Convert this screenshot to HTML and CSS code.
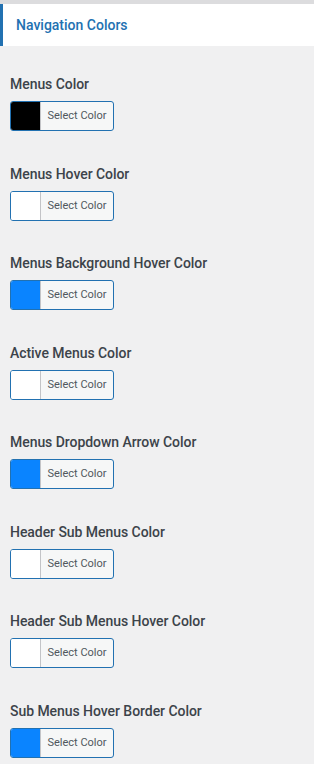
FILE: index.html
```html
<!DOCTYPE html>
<html lang="en">
<head>
  <meta charset="UTF-8" />
  <meta name="viewport" content="width=device-width, initial-scale=1.0"/>
  <title>Navigation Colors</title>
  <link rel="stylesheet" href="styles.css">
</head>
<body>

  <!-- section title -->
  <header class="panel-head">
    <h2>Navigation Colors</h2>
  </header>

  <section class="color-list">
    <div class="color-field">
      <label>Menus Color</label>
      <button class="color-btn"><span class="swatch swatch-black"></span><span class="btn-text">Select Color</span></button>
    </div>
    <div class="color-field">
      <label>Menus Hover Color</label>
      <button class="color-btn"><span class="swatch"></span><span class="btn-text">Select Color</span></button>
    </div>
    <div class="color-field">
      <label>Menus Background Hover Color</label>
      <button class="color-btn"><span class="swatch swatch-blue"></span><span class="btn-text">Select Color</span></button>
    </div>
    <div class="color-field">
      <label>Active Menus Color</label>
      <button class="color-btn"><span class="swatch"></span><span class="btn-text">Select Color</span></button>
    </div>
    <div class="color-field">
      <label>Menus Dropdown Arrow Color</label>
      <button class="color-btn"><span class="swatch swatch-blue"></span><span class="btn-text">Select Color</span></button>
    </div>
    <div class="color-field">
      <label>Header Sub Menus Color</label>
      <button class="color-btn"><span class="swatch"></span><span class="btn-text">Select Color</span></button>
    </div>
    <div class="color-field">
      <label>Header Sub Menus Hover Color</label>
      <button class="color-btn"><span class="swatch"></span><span class="btn-text">Select Color</span></button>
    </div>
    <div class="color-field">
      <label>Sub Menus Hover Border Color</label>
      <button class="color-btn"><span class="swatch swatch-blue"></span><span class="btn-text">Select Color</span></button>
    </div>
  </section>

</body>
</html>
```

FILE: styles.css
```css
* {
  margin: 0;
  padding: 0;
  box-sizing: border-box;
}

body {
  background: #f0f0f1;
  font-family: Roboto, "Noto Sans", sans-serif;
  color: #3c434a;
  border-top: 4px solid #dcdcde;
}

/* title bar */
.panel-head {
  background: #fff;
  border-left: 3px solid #2271b1;
  height: 42px;
  display: flex;
  align-items: center;
  padding-left: 13px;
}

.panel-head h2 {
  font-size: 14px;
  font-weight: 500;
  color: #2271b1;
  line-height: 20px;
  margin-top: -1px;
}

/* color fields */
.color-list {
  display: flex;
  flex-direction: column;
  gap: 32.5px;
  padding: 28px 10px 0;
}

.color-field {
  display: flex;
  flex-direction: column;
  align-items: flex-start;
  gap: 7px;
}

.color-field label {
  font-size: 14px;
  font-weight: 500;
  line-height: 20px;
  letter-spacing: -0.05px;
  color: #3c434a;
}

.color-btn {
  display: flex;
  height: 30px;
  width: 104px;
  border: 1px solid #2271b1;
  border-radius: 3px;
  background: #f6f7f7;
  overflow: hidden;
  font-family: inherit;
  cursor: pointer;
}

.swatch {
  width: 30px;
  height: 100%;
  background: #fff;
  border-right: 1px solid #c3c4c7;
}

.swatch-black {
  background: #000;
}

.swatch-blue {
  background: #0a84ff;
}

.btn-text {
  flex: 1;
  align-self: center;
  font-size: 11px;
  color: #50575e;
  text-align: center;
  line-height: 14px;
}
```
